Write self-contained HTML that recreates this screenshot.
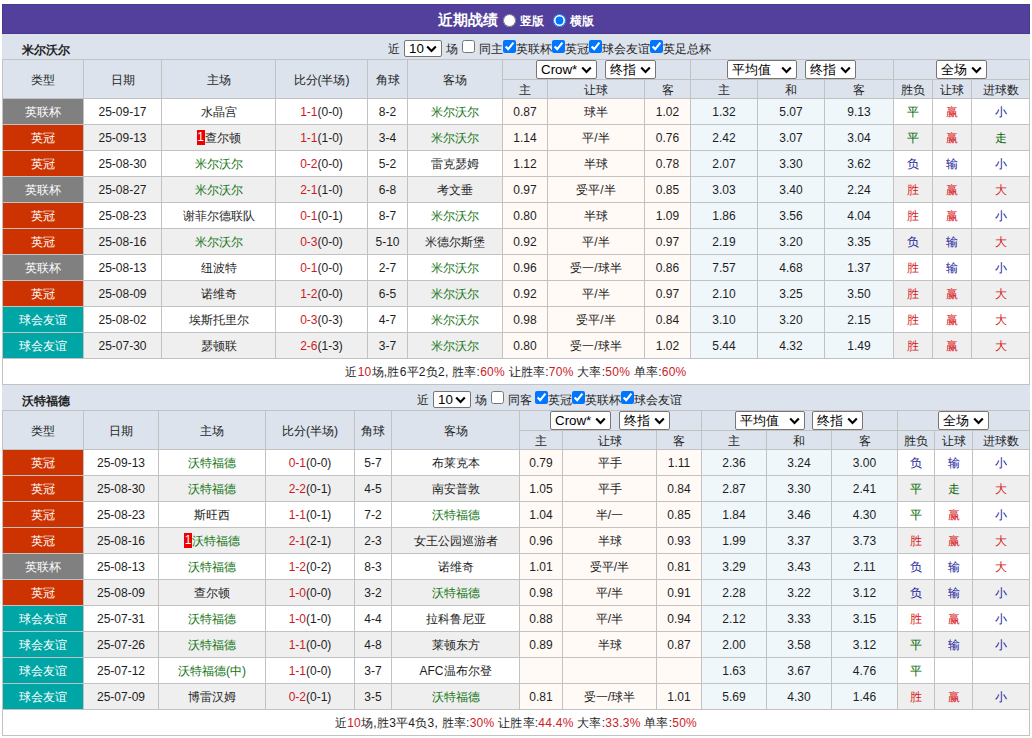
<!DOCTYPE html>
<html><head><meta charset="utf-8"><style>
*{margin:0;padding:0;box-sizing:border-box}
html,body{width:1032px;height:738px;overflow:hidden;background:#fff}
body{position:relative;font-family:"Liberation Sans",sans-serif;font-size:12px;color:#1e1e1e}
.title{position:absolute;left:2px;top:4px;width:1028px;height:30px;background:#52409c;border:1px solid #4a3a8c;color:#fff;text-align:center}
.title .t{position:absolute;left:435px;top:5px;font-size:15px;font-weight:bold;line-height:20px}
.title .t2{position:absolute;top:8px;font-size:12px;font-weight:bold;line-height:16px}
.team{position:absolute;left:2px;width:1028px;height:25px;background:#dce3ec;font-weight:bold;padding-left:20px;padding-top:4px;line-height:25px}
.ctl{position:absolute;height:25px;line-height:25px;white-space:nowrap}
.grid{position:absolute;left:2px;width:1028px;background:#c2c2c2}
.c{position:absolute;text-align:center;white-space:nowrap;overflow:hidden}
.w{color:#fff}
.s{letter-spacing:0.25px}
.gr{color:#127412}
.sc{color:#cc1a26}
.red{color:#cc1a26;font-weight:normal}
.rg{color:#006600}.rr{color:#d81818}.rb{color:#1a1a9c}
.rc{display:inline-block;background:#e00;color:#fff;width:8px;height:15px;line-height:15px;text-align:center;vertical-align:middle;margin-top:-3px}
.ct{position:absolute;line-height:25px;white-space:nowrap}
.ns{position:absolute;margin:0;font-family:"Liberation Sans",sans-serif;font-size:13.33px;color:#000}
.cs{position:absolute;border:1px solid #767676;border-radius:2px;background:#fff;font-size:13.33px;color:#000;padding-left:4px;white-space:nowrap}
.chev{position:absolute;right:4px;top:50%;margin-top:-4px}
.nc{position:absolute;margin:0;width:13px;height:13px}
.rd{position:absolute;margin:0;width:13px;height:13px;top:9px}
.sel{display:inline-block;position:relative;height:17px;line-height:15px;border:1px solid #767676;border-radius:2px;background:#fff;text-align:left;padding-left:4px;vertical-align:middle;font-size:13px;color:#111}
.sel i{position:absolute;right:5px;top:4px;width:6px;height:6px;border-right:2px solid #111;border-bottom:2px solid #111;transform:rotate(45deg)}
.cb{display:inline-block;width:13px;height:13px;border:1px solid #767676;border-radius:2px;background:#fff;vertical-align:middle;margin:0 1px}
.cb.on{background:#0075ff;border-color:#0075ff}
</style></head><body>
<div class="title"><span class="t">近期战绩</span><input type="radio" name="v" class="rd" style="left:500px"><span class="t2" style="left:517px">竖版</span><input type="radio" name="v" class="rd" checked style="left:550px"><span class="t2" style="left:567px">横版</span></div>
<div class="team" style="top:34px">米尔沃尔</div><span class="ct" style="left:388px;top:37px">近</span><div class="cs" style="left:404px;top:40px;width:38px;height:17px;line-height:15px">10<svg class="chev" width="11" height="8" viewBox="0 0 11 8"><path d="M1.2 1.5 L5.5 6 L9.8 1.5" stroke="#000" stroke-width="2.1" fill="none"/></svg></div><span class="ct" style="left:446px;top:37px">场</span><input type="checkbox" class="nc" style="left:462px;top:40px"><span class="ct" style="left:479px;top:37px">同主</span><input type="checkbox" class="nc" style="left:503px;top:40px" checked><span class="ct" style="left:516px;top:37px">英联杯</span><input type="checkbox" class="nc" style="left:552px;top:40px" checked><span class="ct" style="left:565px;top:37px">英冠</span><input type="checkbox" class="nc" style="left:589px;top:40px" checked><span class="ct" style="left:602px;top:37px">球会友谊</span><input type="checkbox" class="nc" style="left:650px;top:40px" checked><span class="ct" style="left:663px;top:37px">英足总杯</span><div class="grid" style="top:59px;height:326px"></div><div class="c h" style="left:3px;top:60px;width:80px;height:38px;line-height:40px;background:#dce3ec;">类型</div><div class="c h" style="left:84px;top:60px;width:77px;height:38px;line-height:40px;background:#dce3ec;">日期</div><div class="c h" style="left:162px;top:60px;width:113px;height:38px;line-height:40px;background:#dce3ec;">主场</div><div class="c h" style="left:276px;top:60px;width:91px;height:38px;line-height:40px;background:#dce3ec;">比分(半场)</div><div class="c h" style="left:368px;top:60px;width:39px;height:38px;line-height:40px;background:#dce3ec;">角球</div><div class="c h" style="left:408px;top:60px;width:94px;height:38px;line-height:40px;background:#dce3ec;">客场</div><div class="c h g" style="left:503px;top:60px;width:187px;height:19px;line-height:21px;background:#dce3ec;"></div><div class="c h g" style="left:691px;top:60px;width:202px;height:19px;line-height:21px;background:#dce3ec;"></div><div class="c h g" style="left:894px;top:60px;width:135px;height:19px;line-height:21px;background:#dce3ec;"></div><div class="cs" style="left:536px;top:60px;width:61px;height:19px;line-height:17px">Crow*<svg class="chev" width="11" height="8" viewBox="0 0 11 8"><path d="M1.2 1.5 L5.5 6 L9.8 1.5" stroke="#000" stroke-width="2.1" fill="none"/></svg></div><div class="cs" style="left:605px;top:60px;width:51px;height:19px;line-height:17px">终指<svg class="chev" width="11" height="8" viewBox="0 0 11 8"><path d="M1.2 1.5 L5.5 6 L9.8 1.5" stroke="#000" stroke-width="2.1" fill="none"/></svg></div><div class="cs" style="left:727px;top:60px;width:70px;height:19px;line-height:17px">平均值<svg class="chev" width="11" height="8" viewBox="0 0 11 8"><path d="M1.2 1.5 L5.5 6 L9.8 1.5" stroke="#000" stroke-width="2.1" fill="none"/></svg></div><div class="cs" style="left:805px;top:60px;width:51px;height:19px;line-height:17px">终指<svg class="chev" width="11" height="8" viewBox="0 0 11 8"><path d="M1.2 1.5 L5.5 6 L9.8 1.5" stroke="#000" stroke-width="2.1" fill="none"/></svg></div><div class="cs" style="left:936px;top:60px;width:51px;height:19px;line-height:17px">全场<svg class="chev" width="11" height="8" viewBox="0 0 11 8"><path d="M1.2 1.5 L5.5 6 L9.8 1.5" stroke="#000" stroke-width="2.1" fill="none"/></svg></div><div class="c h" style="left:503px;top:80px;width:44px;height:18px;line-height:20px;background:#dce3ec;">主</div><div class="c h" style="left:548px;top:80px;width:96px;height:18px;line-height:20px;background:#dce3ec;">让球</div><div class="c h" style="left:645px;top:80px;width:45px;height:18px;line-height:20px;background:#dce3ec;">客</div><div class="c h" style="left:691px;top:80px;width:66px;height:18px;line-height:20px;background:#dce3ec;">主</div><div class="c h" style="left:758px;top:80px;width:66px;height:18px;line-height:20px;background:#dce3ec;">和</div><div class="c h" style="left:825px;top:80px;width:68px;height:18px;line-height:20px;background:#dce3ec;">客</div><div class="c h" style="left:894px;top:80px;width:38px;height:18px;line-height:20px;background:#dce3ec;">胜负</div><div class="c h" style="left:933px;top:80px;width:38px;height:18px;line-height:20px;background:#dce3ec;">让球</div><div class="c h" style="left:972px;top:80px;width:57px;height:18px;line-height:20px;background:#dce3ec;">进球数</div><div class="c w" style="left:3px;top:99px;width:80px;height:25px;line-height:27px;background:#808080;">英联杯</div><div class="c" style="left:84px;top:99px;width:77px;height:25px;line-height:27px;background:#ffffff;">25-09-17</div><div class="c" style="left:162px;top:99px;width:113px;height:25px;line-height:27px;background:#ffffff;"><span class="">水晶宫</span></div><div class="c" style="left:276px;top:99px;width:91px;height:25px;line-height:27px;background:#ffffff;"><span class="sc">1-1</span>(0-0)</div><div class="c" style="left:368px;top:99px;width:39px;height:25px;line-height:27px;background:#ffffff;">8-2</div><div class="c" style="left:408px;top:99px;width:94px;height:25px;line-height:27px;background:#ffffff;"><span class="gr">米尔沃尔</span></div><div class="c" style="left:503px;top:99px;width:44px;height:25px;line-height:27px;background:#fffaf6;">0.87</div><div class="c" style="left:548px;top:99px;width:96px;height:25px;line-height:27px;background:#fffaf6;">球半</div><div class="c" style="left:645px;top:99px;width:45px;height:25px;line-height:27px;background:#fffaf6;">1.02</div><div class="c" style="left:691px;top:99px;width:66px;height:25px;line-height:27px;background:#f0f7fb;">1.32</div><div class="c" style="left:758px;top:99px;width:66px;height:25px;line-height:27px;background:#f0f7fb;">5.07</div><div class="c" style="left:825px;top:99px;width:68px;height:25px;line-height:27px;background:#f0f7fb;">9.13</div><div class="c" style="left:894px;top:99px;width:38px;height:25px;line-height:27px;background:#ffffff;"><span class="rg">平</span></div><div class="c" style="left:933px;top:99px;width:38px;height:25px;line-height:27px;background:#ffffff;"><span class="rr">赢</span></div><div class="c" style="left:972px;top:99px;width:57px;height:25px;line-height:27px;background:#ffffff;"><span class="rb">小</span></div><div class="c w" style="left:3px;top:125px;width:80px;height:25px;line-height:27px;background:#cc3300;">英冠</div><div class="c" style="left:84px;top:125px;width:77px;height:25px;line-height:27px;background:#efefef;">25-09-13</div><div class="c" style="left:162px;top:125px;width:113px;height:25px;line-height:27px;background:#efefef;"><span class="rc">1</span><span class="">查尔顿</span></div><div class="c" style="left:276px;top:125px;width:91px;height:25px;line-height:27px;background:#efefef;"><span class="sc">1-1</span>(1-0)</div><div class="c" style="left:368px;top:125px;width:39px;height:25px;line-height:27px;background:#efefef;">3-4</div><div class="c" style="left:408px;top:125px;width:94px;height:25px;line-height:27px;background:#efefef;"><span class="gr">米尔沃尔</span></div><div class="c" style="left:503px;top:125px;width:44px;height:25px;line-height:27px;background:#fffaf6;">1.14</div><div class="c" style="left:548px;top:125px;width:96px;height:25px;line-height:27px;background:#fffaf6;">平/半</div><div class="c" style="left:645px;top:125px;width:45px;height:25px;line-height:27px;background:#fffaf6;">0.76</div><div class="c" style="left:691px;top:125px;width:66px;height:25px;line-height:27px;background:#f0f7fb;">2.42</div><div class="c" style="left:758px;top:125px;width:66px;height:25px;line-height:27px;background:#f0f7fb;">3.07</div><div class="c" style="left:825px;top:125px;width:68px;height:25px;line-height:27px;background:#f0f7fb;">3.04</div><div class="c" style="left:894px;top:125px;width:38px;height:25px;line-height:27px;background:#efefef;"><span class="rg">平</span></div><div class="c" style="left:933px;top:125px;width:38px;height:25px;line-height:27px;background:#efefef;"><span class="rr">赢</span></div><div class="c" style="left:972px;top:125px;width:57px;height:25px;line-height:27px;background:#efefef;"><span class="rg">走</span></div><div class="c w" style="left:3px;top:151px;width:80px;height:25px;line-height:27px;background:#cc3300;">英冠</div><div class="c" style="left:84px;top:151px;width:77px;height:25px;line-height:27px;background:#ffffff;">25-08-30</div><div class="c" style="left:162px;top:151px;width:113px;height:25px;line-height:27px;background:#ffffff;"><span class="gr">米尔沃尔</span></div><div class="c" style="left:276px;top:151px;width:91px;height:25px;line-height:27px;background:#ffffff;"><span class="sc">0-2</span>(0-0)</div><div class="c" style="left:368px;top:151px;width:39px;height:25px;line-height:27px;background:#ffffff;">5-2</div><div class="c" style="left:408px;top:151px;width:94px;height:25px;line-height:27px;background:#ffffff;"><span class="">雷克瑟姆</span></div><div class="c" style="left:503px;top:151px;width:44px;height:25px;line-height:27px;background:#fffaf6;">1.12</div><div class="c" style="left:548px;top:151px;width:96px;height:25px;line-height:27px;background:#fffaf6;">半球</div><div class="c" style="left:645px;top:151px;width:45px;height:25px;line-height:27px;background:#fffaf6;">0.78</div><div class="c" style="left:691px;top:151px;width:66px;height:25px;line-height:27px;background:#f0f7fb;">2.07</div><div class="c" style="left:758px;top:151px;width:66px;height:25px;line-height:27px;background:#f0f7fb;">3.30</div><div class="c" style="left:825px;top:151px;width:68px;height:25px;line-height:27px;background:#f0f7fb;">3.62</div><div class="c" style="left:894px;top:151px;width:38px;height:25px;line-height:27px;background:#ffffff;"><span class="rb">负</span></div><div class="c" style="left:933px;top:151px;width:38px;height:25px;line-height:27px;background:#ffffff;"><span class="rb">输</span></div><div class="c" style="left:972px;top:151px;width:57px;height:25px;line-height:27px;background:#ffffff;"><span class="rb">小</span></div><div class="c w" style="left:3px;top:177px;width:80px;height:25px;line-height:27px;background:#808080;">英联杯</div><div class="c" style="left:84px;top:177px;width:77px;height:25px;line-height:27px;background:#efefef;">25-08-27</div><div class="c" style="left:162px;top:177px;width:113px;height:25px;line-height:27px;background:#efefef;"><span class="gr">米尔沃尔</span></div><div class="c" style="left:276px;top:177px;width:91px;height:25px;line-height:27px;background:#efefef;"><span class="sc">2-1</span>(1-0)</div><div class="c" style="left:368px;top:177px;width:39px;height:25px;line-height:27px;background:#efefef;">6-8</div><div class="c" style="left:408px;top:177px;width:94px;height:25px;line-height:27px;background:#efefef;"><span class="">考文垂</span></div><div class="c" style="left:503px;top:177px;width:44px;height:25px;line-height:27px;background:#fffaf6;">0.97</div><div class="c" style="left:548px;top:177px;width:96px;height:25px;line-height:27px;background:#fffaf6;">受平/半</div><div class="c" style="left:645px;top:177px;width:45px;height:25px;line-height:27px;background:#fffaf6;">0.85</div><div class="c" style="left:691px;top:177px;width:66px;height:25px;line-height:27px;background:#f0f7fb;">3.03</div><div class="c" style="left:758px;top:177px;width:66px;height:25px;line-height:27px;background:#f0f7fb;">3.40</div><div class="c" style="left:825px;top:177px;width:68px;height:25px;line-height:27px;background:#f0f7fb;">2.24</div><div class="c" style="left:894px;top:177px;width:38px;height:25px;line-height:27px;background:#efefef;"><span class="rr">胜</span></div><div class="c" style="left:933px;top:177px;width:38px;height:25px;line-height:27px;background:#efefef;"><span class="rr">赢</span></div><div class="c" style="left:972px;top:177px;width:57px;height:25px;line-height:27px;background:#efefef;"><span class="rr">大</span></div><div class="c w" style="left:3px;top:203px;width:80px;height:25px;line-height:27px;background:#cc3300;">英冠</div><div class="c" style="left:84px;top:203px;width:77px;height:25px;line-height:27px;background:#ffffff;">25-08-23</div><div class="c" style="left:162px;top:203px;width:113px;height:25px;line-height:27px;background:#ffffff;"><span class="">谢菲尔德联队</span></div><div class="c" style="left:276px;top:203px;width:91px;height:25px;line-height:27px;background:#ffffff;"><span class="sc">0-1</span>(0-1)</div><div class="c" style="left:368px;top:203px;width:39px;height:25px;line-height:27px;background:#ffffff;">8-7</div><div class="c" style="left:408px;top:203px;width:94px;height:25px;line-height:27px;background:#ffffff;"><span class="gr">米尔沃尔</span></div><div class="c" style="left:503px;top:203px;width:44px;height:25px;line-height:27px;background:#fffaf6;">0.80</div><div class="c" style="left:548px;top:203px;width:96px;height:25px;line-height:27px;background:#fffaf6;">半球</div><div class="c" style="left:645px;top:203px;width:45px;height:25px;line-height:27px;background:#fffaf6;">1.09</div><div class="c" style="left:691px;top:203px;width:66px;height:25px;line-height:27px;background:#f0f7fb;">1.86</div><div class="c" style="left:758px;top:203px;width:66px;height:25px;line-height:27px;background:#f0f7fb;">3.56</div><div class="c" style="left:825px;top:203px;width:68px;height:25px;line-height:27px;background:#f0f7fb;">4.04</div><div class="c" style="left:894px;top:203px;width:38px;height:25px;line-height:27px;background:#ffffff;"><span class="rr">胜</span></div><div class="c" style="left:933px;top:203px;width:38px;height:25px;line-height:27px;background:#ffffff;"><span class="rr">赢</span></div><div class="c" style="left:972px;top:203px;width:57px;height:25px;line-height:27px;background:#ffffff;"><span class="rb">小</span></div><div class="c w" style="left:3px;top:229px;width:80px;height:25px;line-height:27px;background:#cc3300;">英冠</div><div class="c" style="left:84px;top:229px;width:77px;height:25px;line-height:27px;background:#efefef;">25-08-16</div><div class="c" style="left:162px;top:229px;width:113px;height:25px;line-height:27px;background:#efefef;"><span class="gr">米尔沃尔</span></div><div class="c" style="left:276px;top:229px;width:91px;height:25px;line-height:27px;background:#efefef;"><span class="sc">0-3</span>(0-0)</div><div class="c" style="left:368px;top:229px;width:39px;height:25px;line-height:27px;background:#efefef;">5-10</div><div class="c" style="left:408px;top:229px;width:94px;height:25px;line-height:27px;background:#efefef;"><span class="">米德尔斯堡</span></div><div class="c" style="left:503px;top:229px;width:44px;height:25px;line-height:27px;background:#fffaf6;">0.92</div><div class="c" style="left:548px;top:229px;width:96px;height:25px;line-height:27px;background:#fffaf6;">平/半</div><div class="c" style="left:645px;top:229px;width:45px;height:25px;line-height:27px;background:#fffaf6;">0.97</div><div class="c" style="left:691px;top:229px;width:66px;height:25px;line-height:27px;background:#f0f7fb;">2.19</div><div class="c" style="left:758px;top:229px;width:66px;height:25px;line-height:27px;background:#f0f7fb;">3.20</div><div class="c" style="left:825px;top:229px;width:68px;height:25px;line-height:27px;background:#f0f7fb;">3.35</div><div class="c" style="left:894px;top:229px;width:38px;height:25px;line-height:27px;background:#efefef;"><span class="rb">负</span></div><div class="c" style="left:933px;top:229px;width:38px;height:25px;line-height:27px;background:#efefef;"><span class="rb">输</span></div><div class="c" style="left:972px;top:229px;width:57px;height:25px;line-height:27px;background:#efefef;"><span class="rr">大</span></div><div class="c w" style="left:3px;top:255px;width:80px;height:25px;line-height:27px;background:#808080;">英联杯</div><div class="c" style="left:84px;top:255px;width:77px;height:25px;line-height:27px;background:#ffffff;">25-08-13</div><div class="c" style="left:162px;top:255px;width:113px;height:25px;line-height:27px;background:#ffffff;"><span class="">纽波特</span></div><div class="c" style="left:276px;top:255px;width:91px;height:25px;line-height:27px;background:#ffffff;"><span class="sc">0-1</span>(0-0)</div><div class="c" style="left:368px;top:255px;width:39px;height:25px;line-height:27px;background:#ffffff;">2-7</div><div class="c" style="left:408px;top:255px;width:94px;height:25px;line-height:27px;background:#ffffff;"><span class="gr">米尔沃尔</span></div><div class="c" style="left:503px;top:255px;width:44px;height:25px;line-height:27px;background:#fffaf6;">0.96</div><div class="c" style="left:548px;top:255px;width:96px;height:25px;line-height:27px;background:#fffaf6;">受一/球半</div><div class="c" style="left:645px;top:255px;width:45px;height:25px;line-height:27px;background:#fffaf6;">0.86</div><div class="c" style="left:691px;top:255px;width:66px;height:25px;line-height:27px;background:#f0f7fb;">7.57</div><div class="c" style="left:758px;top:255px;width:66px;height:25px;line-height:27px;background:#f0f7fb;">4.68</div><div class="c" style="left:825px;top:255px;width:68px;height:25px;line-height:27px;background:#f0f7fb;">1.37</div><div class="c" style="left:894px;top:255px;width:38px;height:25px;line-height:27px;background:#ffffff;"><span class="rr">胜</span></div><div class="c" style="left:933px;top:255px;width:38px;height:25px;line-height:27px;background:#ffffff;"><span class="rb">输</span></div><div class="c" style="left:972px;top:255px;width:57px;height:25px;line-height:27px;background:#ffffff;"><span class="rb">小</span></div><div class="c w" style="left:3px;top:281px;width:80px;height:25px;line-height:27px;background:#cc3300;">英冠</div><div class="c" style="left:84px;top:281px;width:77px;height:25px;line-height:27px;background:#efefef;">25-08-09</div><div class="c" style="left:162px;top:281px;width:113px;height:25px;line-height:27px;background:#efefef;"><span class="">诺维奇</span></div><div class="c" style="left:276px;top:281px;width:91px;height:25px;line-height:27px;background:#efefef;"><span class="sc">1-2</span>(0-0)</div><div class="c" style="left:368px;top:281px;width:39px;height:25px;line-height:27px;background:#efefef;">6-5</div><div class="c" style="left:408px;top:281px;width:94px;height:25px;line-height:27px;background:#efefef;"><span class="gr">米尔沃尔</span></div><div class="c" style="left:503px;top:281px;width:44px;height:25px;line-height:27px;background:#fffaf6;">0.92</div><div class="c" style="left:548px;top:281px;width:96px;height:25px;line-height:27px;background:#fffaf6;">平/半</div><div class="c" style="left:645px;top:281px;width:45px;height:25px;line-height:27px;background:#fffaf6;">0.97</div><div class="c" style="left:691px;top:281px;width:66px;height:25px;line-height:27px;background:#f0f7fb;">2.10</div><div class="c" style="left:758px;top:281px;width:66px;height:25px;line-height:27px;background:#f0f7fb;">3.25</div><div class="c" style="left:825px;top:281px;width:68px;height:25px;line-height:27px;background:#f0f7fb;">3.50</div><div class="c" style="left:894px;top:281px;width:38px;height:25px;line-height:27px;background:#efefef;"><span class="rr">胜</span></div><div class="c" style="left:933px;top:281px;width:38px;height:25px;line-height:27px;background:#efefef;"><span class="rr">赢</span></div><div class="c" style="left:972px;top:281px;width:57px;height:25px;line-height:27px;background:#efefef;"><span class="rr">大</span></div><div class="c w" style="left:3px;top:307px;width:80px;height:25px;line-height:27px;background:#00a5a5;">球会友谊</div><div class="c" style="left:84px;top:307px;width:77px;height:25px;line-height:27px;background:#ffffff;">25-08-02</div><div class="c" style="left:162px;top:307px;width:113px;height:25px;line-height:27px;background:#ffffff;"><span class="">埃斯托里尔</span></div><div class="c" style="left:276px;top:307px;width:91px;height:25px;line-height:27px;background:#ffffff;"><span class="sc">0-3</span>(0-3)</div><div class="c" style="left:368px;top:307px;width:39px;height:25px;line-height:27px;background:#ffffff;">4-7</div><div class="c" style="left:408px;top:307px;width:94px;height:25px;line-height:27px;background:#ffffff;"><span class="gr">米尔沃尔</span></div><div class="c" style="left:503px;top:307px;width:44px;height:25px;line-height:27px;background:#fffaf6;">0.98</div><div class="c" style="left:548px;top:307px;width:96px;height:25px;line-height:27px;background:#fffaf6;">受平/半</div><div class="c" style="left:645px;top:307px;width:45px;height:25px;line-height:27px;background:#fffaf6;">0.84</div><div class="c" style="left:691px;top:307px;width:66px;height:25px;line-height:27px;background:#f0f7fb;">3.10</div><div class="c" style="left:758px;top:307px;width:66px;height:25px;line-height:27px;background:#f0f7fb;">3.20</div><div class="c" style="left:825px;top:307px;width:68px;height:25px;line-height:27px;background:#f0f7fb;">2.15</div><div class="c" style="left:894px;top:307px;width:38px;height:25px;line-height:27px;background:#ffffff;"><span class="rr">胜</span></div><div class="c" style="left:933px;top:307px;width:38px;height:25px;line-height:27px;background:#ffffff;"><span class="rr">赢</span></div><div class="c" style="left:972px;top:307px;width:57px;height:25px;line-height:27px;background:#ffffff;"><span class="rr">大</span></div><div class="c w" style="left:3px;top:333px;width:80px;height:25px;line-height:27px;background:#00a5a5;">球会友谊</div><div class="c" style="left:84px;top:333px;width:77px;height:25px;line-height:27px;background:#efefef;">25-07-30</div><div class="c" style="left:162px;top:333px;width:113px;height:25px;line-height:27px;background:#efefef;"><span class="">瑟顿联</span></div><div class="c" style="left:276px;top:333px;width:91px;height:25px;line-height:27px;background:#efefef;"><span class="sc">2-6</span>(1-3)</div><div class="c" style="left:368px;top:333px;width:39px;height:25px;line-height:27px;background:#efefef;">3-7</div><div class="c" style="left:408px;top:333px;width:94px;height:25px;line-height:27px;background:#efefef;"><span class="gr">米尔沃尔</span></div><div class="c" style="left:503px;top:333px;width:44px;height:25px;line-height:27px;background:#fffaf6;">0.80</div><div class="c" style="left:548px;top:333px;width:96px;height:25px;line-height:27px;background:#fffaf6;">受一/球半</div><div class="c" style="left:645px;top:333px;width:45px;height:25px;line-height:27px;background:#fffaf6;">1.02</div><div class="c" style="left:691px;top:333px;width:66px;height:25px;line-height:27px;background:#f0f7fb;">5.44</div><div class="c" style="left:758px;top:333px;width:66px;height:25px;line-height:27px;background:#f0f7fb;">4.32</div><div class="c" style="left:825px;top:333px;width:68px;height:25px;line-height:27px;background:#f0f7fb;">1.49</div><div class="c" style="left:894px;top:333px;width:38px;height:25px;line-height:27px;background:#efefef;"><span class="rr">胜</span></div><div class="c" style="left:933px;top:333px;width:38px;height:25px;line-height:27px;background:#efefef;"><span class="rr">赢</span></div><div class="c" style="left:972px;top:333px;width:57px;height:25px;line-height:27px;background:#efefef;"><span class="rr">大</span></div><div class="c s" style="left:3px;top:359px;width:1026px;height:25px;line-height:27px;background:#ffffff;">近<b class="red">10</b>场,胜6平2负2, 胜率:<b class="red">60%</b> 让胜率:<b class="red">70%</b> 大率:<b class="red">50%</b> 单率:<b class="red">60%</b></div><div class="team" style="top:385px">沃特福德</div><span class="ct" style="left:417px;top:388px">近</span><div class="cs" style="left:433px;top:391px;width:38px;height:17px;line-height:15px">10<svg class="chev" width="11" height="8" viewBox="0 0 11 8"><path d="M1.2 1.5 L5.5 6 L9.8 1.5" stroke="#000" stroke-width="2.1" fill="none"/></svg></div><span class="ct" style="left:475px;top:388px">场</span><input type="checkbox" class="nc" style="left:491px;top:391px"><span class="ct" style="left:508px;top:388px">同客</span><input type="checkbox" class="nc" style="left:535px;top:391px" checked><span class="ct" style="left:548px;top:388px">英冠</span><input type="checkbox" class="nc" style="left:572px;top:391px" checked><span class="ct" style="left:585px;top:388px">英联杯</span><input type="checkbox" class="nc" style="left:621px;top:391px" checked><span class="ct" style="left:634px;top:388px">球会友谊</span><div class="grid" style="top:410px;height:326px"></div><div class="c h" style="left:3px;top:411px;width:80px;height:38px;line-height:40px;background:#dce3ec;">类型</div><div class="c h" style="left:84px;top:411px;width:74px;height:38px;line-height:40px;background:#dce3ec;">日期</div><div class="c h" style="left:159px;top:411px;width:106px;height:38px;line-height:40px;background:#dce3ec;">主场</div><div class="c h" style="left:266px;top:411px;width:88px;height:38px;line-height:40px;background:#dce3ec;">比分(半场)</div><div class="c h" style="left:355px;top:411px;width:36px;height:38px;line-height:40px;background:#dce3ec;">角球</div><div class="c h" style="left:392px;top:411px;width:127px;height:38px;line-height:40px;background:#dce3ec;">客场</div><div class="c h g" style="left:520px;top:411px;width:181px;height:19px;line-height:21px;background:#dce3ec;"></div><div class="c h g" style="left:702px;top:411px;width:195px;height:19px;line-height:21px;background:#dce3ec;"></div><div class="c h g" style="left:898px;top:411px;width:131px;height:19px;line-height:21px;background:#dce3ec;"></div><div class="cs" style="left:550px;top:411px;width:61px;height:19px;line-height:17px">Crow*<svg class="chev" width="11" height="8" viewBox="0 0 11 8"><path d="M1.2 1.5 L5.5 6 L9.8 1.5" stroke="#000" stroke-width="2.1" fill="none"/></svg></div><div class="cs" style="left:619px;top:411px;width:51px;height:19px;line-height:17px">终指<svg class="chev" width="11" height="8" viewBox="0 0 11 8"><path d="M1.2 1.5 L5.5 6 L9.8 1.5" stroke="#000" stroke-width="2.1" fill="none"/></svg></div><div class="cs" style="left:735px;top:411px;width:70px;height:19px;line-height:17px">平均值<svg class="chev" width="11" height="8" viewBox="0 0 11 8"><path d="M1.2 1.5 L5.5 6 L9.8 1.5" stroke="#000" stroke-width="2.1" fill="none"/></svg></div><div class="cs" style="left:812px;top:411px;width:51px;height:19px;line-height:17px">终指<svg class="chev" width="11" height="8" viewBox="0 0 11 8"><path d="M1.2 1.5 L5.5 6 L9.8 1.5" stroke="#000" stroke-width="2.1" fill="none"/></svg></div><div class="cs" style="left:938px;top:411px;width:51px;height:19px;line-height:17px">全场<svg class="chev" width="11" height="8" viewBox="0 0 11 8"><path d="M1.2 1.5 L5.5 6 L9.8 1.5" stroke="#000" stroke-width="2.1" fill="none"/></svg></div><div class="c h" style="left:520px;top:431px;width:42px;height:18px;line-height:20px;background:#dce3ec;">主</div><div class="c h" style="left:563px;top:431px;width:93px;height:18px;line-height:20px;background:#dce3ec;">让球</div><div class="c h" style="left:657px;top:431px;width:44px;height:18px;line-height:20px;background:#dce3ec;">客</div><div class="c h" style="left:702px;top:431px;width:64px;height:18px;line-height:20px;background:#dce3ec;">主</div><div class="c h" style="left:767px;top:431px;width:64px;height:18px;line-height:20px;background:#dce3ec;">和</div><div class="c h" style="left:832px;top:431px;width:65px;height:18px;line-height:20px;background:#dce3ec;">客</div><div class="c h" style="left:898px;top:431px;width:36px;height:18px;line-height:20px;background:#dce3ec;">胜负</div><div class="c h" style="left:935px;top:431px;width:37px;height:18px;line-height:20px;background:#dce3ec;">让球</div><div class="c h" style="left:973px;top:431px;width:56px;height:18px;line-height:20px;background:#dce3ec;">进球数</div><div class="c w" style="left:3px;top:450px;width:80px;height:25px;line-height:27px;background:#cc3300;">英冠</div><div class="c" style="left:84px;top:450px;width:74px;height:25px;line-height:27px;background:#ffffff;">25-09-13</div><div class="c" style="left:159px;top:450px;width:106px;height:25px;line-height:27px;background:#ffffff;"><span class="gr">沃特福德</span></div><div class="c" style="left:266px;top:450px;width:88px;height:25px;line-height:27px;background:#ffffff;"><span class="sc">0-1</span>(0-0)</div><div class="c" style="left:355px;top:450px;width:36px;height:25px;line-height:27px;background:#ffffff;">5-7</div><div class="c" style="left:392px;top:450px;width:127px;height:25px;line-height:27px;background:#ffffff;"><span class="">布莱克本</span></div><div class="c" style="left:520px;top:450px;width:42px;height:25px;line-height:27px;background:#fffaf6;">0.79</div><div class="c" style="left:563px;top:450px;width:93px;height:25px;line-height:27px;background:#fffaf6;">平手</div><div class="c" style="left:657px;top:450px;width:44px;height:25px;line-height:27px;background:#fffaf6;">1.11</div><div class="c" style="left:702px;top:450px;width:64px;height:25px;line-height:27px;background:#f0f7fb;">2.36</div><div class="c" style="left:767px;top:450px;width:64px;height:25px;line-height:27px;background:#f0f7fb;">3.24</div><div class="c" style="left:832px;top:450px;width:65px;height:25px;line-height:27px;background:#f0f7fb;">3.00</div><div class="c" style="left:898px;top:450px;width:36px;height:25px;line-height:27px;background:#ffffff;"><span class="rb">负</span></div><div class="c" style="left:935px;top:450px;width:37px;height:25px;line-height:27px;background:#ffffff;"><span class="rb">输</span></div><div class="c" style="left:973px;top:450px;width:56px;height:25px;line-height:27px;background:#ffffff;"><span class="rb">小</span></div><div class="c w" style="left:3px;top:476px;width:80px;height:25px;line-height:27px;background:#cc3300;">英冠</div><div class="c" style="left:84px;top:476px;width:74px;height:25px;line-height:27px;background:#efefef;">25-08-30</div><div class="c" style="left:159px;top:476px;width:106px;height:25px;line-height:27px;background:#efefef;"><span class="gr">沃特福德</span></div><div class="c" style="left:266px;top:476px;width:88px;height:25px;line-height:27px;background:#efefef;"><span class="sc">2-2</span>(0-1)</div><div class="c" style="left:355px;top:476px;width:36px;height:25px;line-height:27px;background:#efefef;">4-5</div><div class="c" style="left:392px;top:476px;width:127px;height:25px;line-height:27px;background:#efefef;"><span class="">南安普敦</span></div><div class="c" style="left:520px;top:476px;width:42px;height:25px;line-height:27px;background:#fffaf6;">1.05</div><div class="c" style="left:563px;top:476px;width:93px;height:25px;line-height:27px;background:#fffaf6;">平手</div><div class="c" style="left:657px;top:476px;width:44px;height:25px;line-height:27px;background:#fffaf6;">0.84</div><div class="c" style="left:702px;top:476px;width:64px;height:25px;line-height:27px;background:#f0f7fb;">2.87</div><div class="c" style="left:767px;top:476px;width:64px;height:25px;line-height:27px;background:#f0f7fb;">3.30</div><div class="c" style="left:832px;top:476px;width:65px;height:25px;line-height:27px;background:#f0f7fb;">2.41</div><div class="c" style="left:898px;top:476px;width:36px;height:25px;line-height:27px;background:#efefef;"><span class="rg">平</span></div><div class="c" style="left:935px;top:476px;width:37px;height:25px;line-height:27px;background:#efefef;"><span class="rg">走</span></div><div class="c" style="left:973px;top:476px;width:56px;height:25px;line-height:27px;background:#efefef;"><span class="rr">大</span></div><div class="c w" style="left:3px;top:502px;width:80px;height:25px;line-height:27px;background:#cc3300;">英冠</div><div class="c" style="left:84px;top:502px;width:74px;height:25px;line-height:27px;background:#ffffff;">25-08-23</div><div class="c" style="left:159px;top:502px;width:106px;height:25px;line-height:27px;background:#ffffff;"><span class="">斯旺西</span></div><div class="c" style="left:266px;top:502px;width:88px;height:25px;line-height:27px;background:#ffffff;"><span class="sc">1-1</span>(0-1)</div><div class="c" style="left:355px;top:502px;width:36px;height:25px;line-height:27px;background:#ffffff;">7-2</div><div class="c" style="left:392px;top:502px;width:127px;height:25px;line-height:27px;background:#ffffff;"><span class="gr">沃特福德</span></div><div class="c" style="left:520px;top:502px;width:42px;height:25px;line-height:27px;background:#fffaf6;">1.04</div><div class="c" style="left:563px;top:502px;width:93px;height:25px;line-height:27px;background:#fffaf6;">半/一</div><div class="c" style="left:657px;top:502px;width:44px;height:25px;line-height:27px;background:#fffaf6;">0.85</div><div class="c" style="left:702px;top:502px;width:64px;height:25px;line-height:27px;background:#f0f7fb;">1.84</div><div class="c" style="left:767px;top:502px;width:64px;height:25px;line-height:27px;background:#f0f7fb;">3.46</div><div class="c" style="left:832px;top:502px;width:65px;height:25px;line-height:27px;background:#f0f7fb;">4.30</div><div class="c" style="left:898px;top:502px;width:36px;height:25px;line-height:27px;background:#ffffff;"><span class="rg">平</span></div><div class="c" style="left:935px;top:502px;width:37px;height:25px;line-height:27px;background:#ffffff;"><span class="rr">赢</span></div><div class="c" style="left:973px;top:502px;width:56px;height:25px;line-height:27px;background:#ffffff;"><span class="rb">小</span></div><div class="c w" style="left:3px;top:528px;width:80px;height:25px;line-height:27px;background:#cc3300;">英冠</div><div class="c" style="left:84px;top:528px;width:74px;height:25px;line-height:27px;background:#efefef;">25-08-16</div><div class="c" style="left:159px;top:528px;width:106px;height:25px;line-height:27px;background:#efefef;"><span class="rc">1</span><span class="gr">沃特福德</span></div><div class="c" style="left:266px;top:528px;width:88px;height:25px;line-height:27px;background:#efefef;"><span class="sc">2-1</span>(2-1)</div><div class="c" style="left:355px;top:528px;width:36px;height:25px;line-height:27px;background:#efefef;">2-3</div><div class="c" style="left:392px;top:528px;width:127px;height:25px;line-height:27px;background:#efefef;"><span class="">女王公园巡游者</span></div><div class="c" style="left:520px;top:528px;width:42px;height:25px;line-height:27px;background:#fffaf6;">0.96</div><div class="c" style="left:563px;top:528px;width:93px;height:25px;line-height:27px;background:#fffaf6;">半球</div><div class="c" style="left:657px;top:528px;width:44px;height:25px;line-height:27px;background:#fffaf6;">0.93</div><div class="c" style="left:702px;top:528px;width:64px;height:25px;line-height:27px;background:#f0f7fb;">1.99</div><div class="c" style="left:767px;top:528px;width:64px;height:25px;line-height:27px;background:#f0f7fb;">3.37</div><div class="c" style="left:832px;top:528px;width:65px;height:25px;line-height:27px;background:#f0f7fb;">3.73</div><div class="c" style="left:898px;top:528px;width:36px;height:25px;line-height:27px;background:#efefef;"><span class="rr">胜</span></div><div class="c" style="left:935px;top:528px;width:37px;height:25px;line-height:27px;background:#efefef;"><span class="rr">赢</span></div><div class="c" style="left:973px;top:528px;width:56px;height:25px;line-height:27px;background:#efefef;"><span class="rr">大</span></div><div class="c w" style="left:3px;top:554px;width:80px;height:25px;line-height:27px;background:#808080;">英联杯</div><div class="c" style="left:84px;top:554px;width:74px;height:25px;line-height:27px;background:#ffffff;">25-08-13</div><div class="c" style="left:159px;top:554px;width:106px;height:25px;line-height:27px;background:#ffffff;"><span class="gr">沃特福德</span></div><div class="c" style="left:266px;top:554px;width:88px;height:25px;line-height:27px;background:#ffffff;"><span class="sc">1-2</span>(0-2)</div><div class="c" style="left:355px;top:554px;width:36px;height:25px;line-height:27px;background:#ffffff;">8-3</div><div class="c" style="left:392px;top:554px;width:127px;height:25px;line-height:27px;background:#ffffff;"><span class="">诺维奇</span></div><div class="c" style="left:520px;top:554px;width:42px;height:25px;line-height:27px;background:#fffaf6;">1.01</div><div class="c" style="left:563px;top:554px;width:93px;height:25px;line-height:27px;background:#fffaf6;">受平/半</div><div class="c" style="left:657px;top:554px;width:44px;height:25px;line-height:27px;background:#fffaf6;">0.81</div><div class="c" style="left:702px;top:554px;width:64px;height:25px;line-height:27px;background:#f0f7fb;">3.29</div><div class="c" style="left:767px;top:554px;width:64px;height:25px;line-height:27px;background:#f0f7fb;">3.43</div><div class="c" style="left:832px;top:554px;width:65px;height:25px;line-height:27px;background:#f0f7fb;">2.11</div><div class="c" style="left:898px;top:554px;width:36px;height:25px;line-height:27px;background:#ffffff;"><span class="rb">负</span></div><div class="c" style="left:935px;top:554px;width:37px;height:25px;line-height:27px;background:#ffffff;"><span class="rb">输</span></div><div class="c" style="left:973px;top:554px;width:56px;height:25px;line-height:27px;background:#ffffff;"><span class="rr">大</span></div><div class="c w" style="left:3px;top:580px;width:80px;height:25px;line-height:27px;background:#cc3300;">英冠</div><div class="c" style="left:84px;top:580px;width:74px;height:25px;line-height:27px;background:#efefef;">25-08-09</div><div class="c" style="left:159px;top:580px;width:106px;height:25px;line-height:27px;background:#efefef;"><span class="">查尔顿</span></div><div class="c" style="left:266px;top:580px;width:88px;height:25px;line-height:27px;background:#efefef;"><span class="sc">1-0</span>(0-0)</div><div class="c" style="left:355px;top:580px;width:36px;height:25px;line-height:27px;background:#efefef;">3-2</div><div class="c" style="left:392px;top:580px;width:127px;height:25px;line-height:27px;background:#efefef;"><span class="gr">沃特福德</span></div><div class="c" style="left:520px;top:580px;width:42px;height:25px;line-height:27px;background:#fffaf6;">0.98</div><div class="c" style="left:563px;top:580px;width:93px;height:25px;line-height:27px;background:#fffaf6;">平/半</div><div class="c" style="left:657px;top:580px;width:44px;height:25px;line-height:27px;background:#fffaf6;">0.91</div><div class="c" style="left:702px;top:580px;width:64px;height:25px;line-height:27px;background:#f0f7fb;">2.28</div><div class="c" style="left:767px;top:580px;width:64px;height:25px;line-height:27px;background:#f0f7fb;">3.22</div><div class="c" style="left:832px;top:580px;width:65px;height:25px;line-height:27px;background:#f0f7fb;">3.12</div><div class="c" style="left:898px;top:580px;width:36px;height:25px;line-height:27px;background:#efefef;"><span class="rb">负</span></div><div class="c" style="left:935px;top:580px;width:37px;height:25px;line-height:27px;background:#efefef;"><span class="rb">输</span></div><div class="c" style="left:973px;top:580px;width:56px;height:25px;line-height:27px;background:#efefef;"><span class="rb">小</span></div><div class="c w" style="left:3px;top:606px;width:80px;height:25px;line-height:27px;background:#00a5a5;">球会友谊</div><div class="c" style="left:84px;top:606px;width:74px;height:25px;line-height:27px;background:#ffffff;">25-07-31</div><div class="c" style="left:159px;top:606px;width:106px;height:25px;line-height:27px;background:#ffffff;"><span class="gr">沃特福德</span></div><div class="c" style="left:266px;top:606px;width:88px;height:25px;line-height:27px;background:#ffffff;"><span class="sc">1-0</span>(1-0)</div><div class="c" style="left:355px;top:606px;width:36px;height:25px;line-height:27px;background:#ffffff;">4-4</div><div class="c" style="left:392px;top:606px;width:127px;height:25px;line-height:27px;background:#ffffff;"><span class="">拉科鲁尼亚</span></div><div class="c" style="left:520px;top:606px;width:42px;height:25px;line-height:27px;background:#fffaf6;">0.88</div><div class="c" style="left:563px;top:606px;width:93px;height:25px;line-height:27px;background:#fffaf6;">平/半</div><div class="c" style="left:657px;top:606px;width:44px;height:25px;line-height:27px;background:#fffaf6;">0.94</div><div class="c" style="left:702px;top:606px;width:64px;height:25px;line-height:27px;background:#f0f7fb;">2.12</div><div class="c" style="left:767px;top:606px;width:64px;height:25px;line-height:27px;background:#f0f7fb;">3.33</div><div class="c" style="left:832px;top:606px;width:65px;height:25px;line-height:27px;background:#f0f7fb;">3.15</div><div class="c" style="left:898px;top:606px;width:36px;height:25px;line-height:27px;background:#ffffff;"><span class="rr">胜</span></div><div class="c" style="left:935px;top:606px;width:37px;height:25px;line-height:27px;background:#ffffff;"><span class="rr">赢</span></div><div class="c" style="left:973px;top:606px;width:56px;height:25px;line-height:27px;background:#ffffff;"><span class="rb">小</span></div><div class="c w" style="left:3px;top:632px;width:80px;height:25px;line-height:27px;background:#00a5a5;">球会友谊</div><div class="c" style="left:84px;top:632px;width:74px;height:25px;line-height:27px;background:#efefef;">25-07-26</div><div class="c" style="left:159px;top:632px;width:106px;height:25px;line-height:27px;background:#efefef;"><span class="gr">沃特福德</span></div><div class="c" style="left:266px;top:632px;width:88px;height:25px;line-height:27px;background:#efefef;"><span class="sc">1-1</span>(0-0)</div><div class="c" style="left:355px;top:632px;width:36px;height:25px;line-height:27px;background:#efefef;">4-8</div><div class="c" style="left:392px;top:632px;width:127px;height:25px;line-height:27px;background:#efefef;"><span class="">莱顿东方</span></div><div class="c" style="left:520px;top:632px;width:42px;height:25px;line-height:27px;background:#fffaf6;">0.89</div><div class="c" style="left:563px;top:632px;width:93px;height:25px;line-height:27px;background:#fffaf6;">半球</div><div class="c" style="left:657px;top:632px;width:44px;height:25px;line-height:27px;background:#fffaf6;">0.87</div><div class="c" style="left:702px;top:632px;width:64px;height:25px;line-height:27px;background:#f0f7fb;">2.00</div><div class="c" style="left:767px;top:632px;width:64px;height:25px;line-height:27px;background:#f0f7fb;">3.58</div><div class="c" style="left:832px;top:632px;width:65px;height:25px;line-height:27px;background:#f0f7fb;">3.12</div><div class="c" style="left:898px;top:632px;width:36px;height:25px;line-height:27px;background:#efefef;"><span class="rg">平</span></div><div class="c" style="left:935px;top:632px;width:37px;height:25px;line-height:27px;background:#efefef;"><span class="rb">输</span></div><div class="c" style="left:973px;top:632px;width:56px;height:25px;line-height:27px;background:#efefef;"><span class="rb">小</span></div><div class="c w" style="left:3px;top:658px;width:80px;height:25px;line-height:27px;background:#00a5a5;">球会友谊</div><div class="c" style="left:84px;top:658px;width:74px;height:25px;line-height:27px;background:#ffffff;">25-07-12</div><div class="c" style="left:159px;top:658px;width:106px;height:25px;line-height:27px;background:#ffffff;"><span class="gr">沃特福德(中)</span></div><div class="c" style="left:266px;top:658px;width:88px;height:25px;line-height:27px;background:#ffffff;"><span class="sc">1-1</span>(0-0)</div><div class="c" style="left:355px;top:658px;width:36px;height:25px;line-height:27px;background:#ffffff;">3-7</div><div class="c" style="left:392px;top:658px;width:127px;height:25px;line-height:27px;background:#ffffff;"><span class="">AFC温布尔登</span></div><div class="c" style="left:520px;top:658px;width:42px;height:25px;line-height:27px;background:#fffaf6;"></div><div class="c" style="left:563px;top:658px;width:93px;height:25px;line-height:27px;background:#fffaf6;"></div><div class="c" style="left:657px;top:658px;width:44px;height:25px;line-height:27px;background:#fffaf6;"></div><div class="c" style="left:702px;top:658px;width:64px;height:25px;line-height:27px;background:#f0f7fb;">1.63</div><div class="c" style="left:767px;top:658px;width:64px;height:25px;line-height:27px;background:#f0f7fb;">3.67</div><div class="c" style="left:832px;top:658px;width:65px;height:25px;line-height:27px;background:#f0f7fb;">4.76</div><div class="c" style="left:898px;top:658px;width:36px;height:25px;line-height:27px;background:#ffffff;"><span class="rg">平</span></div><div class="c" style="left:935px;top:658px;width:37px;height:25px;line-height:27px;background:#ffffff;"><span class="rb"></span></div><div class="c" style="left:973px;top:658px;width:56px;height:25px;line-height:27px;background:#ffffff;"><span class="rb"></span></div><div class="c w" style="left:3px;top:684px;width:80px;height:25px;line-height:27px;background:#00a5a5;">球会友谊</div><div class="c" style="left:84px;top:684px;width:74px;height:25px;line-height:27px;background:#efefef;">25-07-09</div><div class="c" style="left:159px;top:684px;width:106px;height:25px;line-height:27px;background:#efefef;"><span class="">博雷汉姆</span></div><div class="c" style="left:266px;top:684px;width:88px;height:25px;line-height:27px;background:#efefef;"><span class="sc">0-2</span>(0-1)</div><div class="c" style="left:355px;top:684px;width:36px;height:25px;line-height:27px;background:#efefef;">3-5</div><div class="c" style="left:392px;top:684px;width:127px;height:25px;line-height:27px;background:#efefef;"><span class="gr">沃特福德</span></div><div class="c" style="left:520px;top:684px;width:42px;height:25px;line-height:27px;background:#fffaf6;">0.81</div><div class="c" style="left:563px;top:684px;width:93px;height:25px;line-height:27px;background:#fffaf6;">受一/球半</div><div class="c" style="left:657px;top:684px;width:44px;height:25px;line-height:27px;background:#fffaf6;">1.01</div><div class="c" style="left:702px;top:684px;width:64px;height:25px;line-height:27px;background:#f0f7fb;">5.69</div><div class="c" style="left:767px;top:684px;width:64px;height:25px;line-height:27px;background:#f0f7fb;">4.30</div><div class="c" style="left:832px;top:684px;width:65px;height:25px;line-height:27px;background:#f0f7fb;">1.46</div><div class="c" style="left:898px;top:684px;width:36px;height:25px;line-height:27px;background:#efefef;"><span class="rr">胜</span></div><div class="c" style="left:935px;top:684px;width:37px;height:25px;line-height:27px;background:#efefef;"><span class="rr">赢</span></div><div class="c" style="left:973px;top:684px;width:56px;height:25px;line-height:27px;background:#efefef;"><span class="rb">小</span></div><div class="c s" style="left:3px;top:710px;width:1026px;height:25px;line-height:27px;background:#ffffff;">近<b class="red">10</b>场,胜3平4负3, 胜率:<b class="red">30%</b> 让胜率:<b class="red">44.4%</b> 大率:<b class="red">33.3%</b> 单率:<b class="red">50%</b></div>
</body></html>
